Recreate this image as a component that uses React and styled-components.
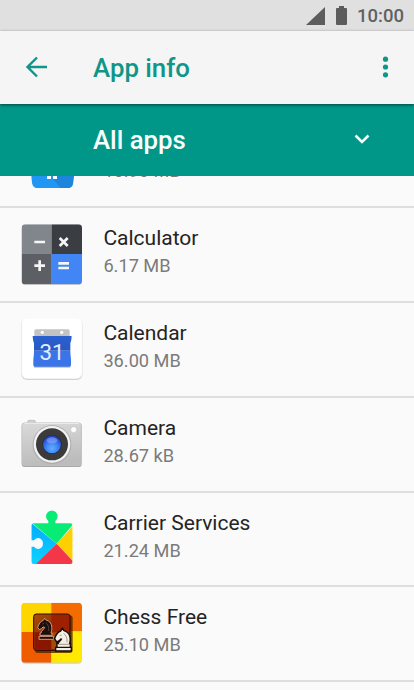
import React from 'react';
import styled, { createGlobalStyle } from 'styled-components';

const GlobalStyle = createGlobalStyle`
  body {
    margin: 0;
    background: #fafafa;
    font-family: Roboto, sans-serif;
  }
`;

const Screen = styled.div`
  display: flex;
  flex-direction: column;
  width: 414px;
  height: 690px;
  overflow: hidden;
  background: #fafafa;
`;

const StatusBar = styled.div`
  display: flex;
  flex: none;
  align-items: center;
  justify-content: flex-end;
  height: 31px;
  padding-right: 10px;
  box-sizing: border-box;
  background: #e0e0e0;
`;

const SignalIcon = styled.svg`
  width: 19px;
  height: 18px;
  margin-right: 11px;
`;

const BatteryIcon = styled.svg`
  width: 11px;
  height: 19px;
  margin: 0 10px 1px 0;
`;

const Clock = styled.span`
  width: 47px;
  padding-top: 1px;
  font-size: 18.5px;
  font-weight: 500;
  line-height: 22px;
  white-space: nowrap;
  color: #606060;
`;

const Toolbar = styled.header`
  display: flex;
  flex: none;
  align-items: center;
  position: relative;
  z-index: 1;
  height: 72.5px;
  padding: 0 25px;
  box-sizing: border-box;
  background: #f5f5f5;
  box-shadow: 0 1px 3px rgba(0, 0, 0, 0.55);
`;

const BackIcon = styled.svg`
  width: 23px;
  height: 22px;
`;

const Title = styled.h1`
  flex: 1;
  margin: 0 0 0 45px;
  padding-top: 2px;
  font-size: 25.8px;
  font-weight: 500;
  line-height: 30px;
  color: #109688;
`;

const MenuIcon = styled.svg`
  width: 8px;
  height: 22px;
`;

const Filter = styled.div`
  display: flex;
  flex: none;
  align-items: center;
  height: 72.5px;
  padding: 0 43px 0 93px;
  box-sizing: border-box;
  background: #009788;
`;

const FilterLabel = styled.span`
  flex: 1;
  font-size: 25.8px;
  font-weight: 500;
  line-height: 30px;
  color: #fafffe;
`;

const ChevronIcon = styled.svg`
  width: 18px;
  height: 12px;
  margin-bottom: 2px;
`;

const AppList = styled.ul`
  flex: 1;
  margin: 0;
  padding: 0;
  list-style: none;
  overflow: hidden;
`;

const AppRow = styled.li`
  display: flex;
  height: 94.9px;
  margin-top: ${props => (props.$scrolled ? '-63px' : '0')};
  padding: 15px 21px 0;
  box-sizing: border-box;
  border-bottom: 2px solid #dedede;
`;

const AppIcon = styled.svg`
  flex: none;
  width: 62px;
  height: 62px;
  margin-right: 20.4px;
`;

const AppText = styled.div`
  padding-top: 2px;
  white-space: nowrap;
`;

const AppName = styled.div`
  font-size: 21px;
  line-height: 27px;
  color: #242424;
`;

const AppSize = styled.div`
  padding-top: 1px;
  font-size: 18.2px;
  line-height: 26px;
  color: #7b7b7b;
`;

const Messages = () => (
  <AppIcon viewBox="0 0 62 62">
    <path d="M7 10h48L52 55q-1 5-5 5H16q-4 0-5-5z" fill="#2196f3" />
    <path d="M31 50l9 10h7q4 0 5-4l1-8H36z" fill="#1d86dc" />
    <path d="M26 44h4v7h-4zM32 44h4v7h-4z" fill="#fff" />
  </AppIcon>
);

const Calculator = () => (
  <AppIcon viewBox="33 33 186 186">
    <clipPath id="calcShape">
      <rect x="35" y="37" width="181" height="180" rx="11" />
    </clipPath>
    <rect x="35" y="40" width="181" height="179" rx="11" fill="#c9c9c9" />
    <g clipPath="url(#calcShape)">
      <path d="M35 37h90v89H35z" fill="#80868b" />
      <path d="M125 37h91v89h-91z" fill="#3a3e42" />
      <path d="M35 126h90v91H35z" fill="#5c6065" />
      <path d="M125 126h91v91h-91z" fill="#4285f4" />
    </g>
    <path
      d="M73 90h32M73 161h32M89 145v32M149 78l24 24M173 78l-24 24M145 154h32M145 168h32"
      stroke="#f5f5f5"
      strokeWidth="8"
    />
  </AppIcon>
);

const Calendar = () => (
  <AppIcon viewBox="33 30 186 186">
    <defs>
      <linearGradient id="calTop" x2="0" y2="1">
        <stop stopColor="#2a60cf" />
        <stop offset="1" stopColor="#285ac4" />
      </linearGradient>
    </defs>
    <rect x="34" y="32" width="183" height="184" rx="17" fill="#d2d2d2" />
    <rect x="35" y="30" width="181" height="182" rx="16" fill="#fff" stroke="#ededed" />
    <path d="M73 69q0-5 5-5h96q5 0 5 5v17H73z" fill="#c3c3c3" />
    <circle cx="97" cy="73" r="5" fill="#fff" />
    <circle cx="155" cy="73" r="5" fill="#fff" />
    <path d="M72 174h109v5H72z" fill="#bdc2ce" />
    <path d="M68 84h117q0 12-4 22v22H72v-22q-4-10-4-22z" fill="url(#calTop)" />
    <path d="M72 128h109q0 12 2 26v17q0 5-5 5H75q-5 0-5-5v-17q2-14 2-26z" fill="#3b74e7" />
    <text x="126" y="155" textAnchor="middle" fontFamily="Roboto" fontSize="67" fill="#e6edff">31</text>
  </AppIcon>
);

const Camera = () => (
  <AppIcon viewBox="33 33 186 186">
    <defs>
      <linearGradient id="camBody" x2="0.2" y2="1">
        <stop stopColor="#dadada" />
        <stop offset="1" stopColor="#bcbcbc" />
      </linearGradient>
      <radialGradient id="camLens" cy="0.72" r="0.65">
        <stop stopColor="#62b0ff" />
        <stop offset="0.55" stopColor="#3a7ff5" />
        <stop offset="1" stopColor="#2440b8" />
      </radialGradient>
    </defs>
    <rect x="53" y="55" width="23" height="12" rx="4" fill="#d2d2d2" stroke="#b4b4b4" strokeWidth="2" />
    <rect x="35" y="63" width="180" height="132" rx="9" fill="#a5a5a5" />
    <rect x="36" y="62" width="178" height="129" rx="9" fill="url(#camBody)" stroke="#c4c4c4" strokeWidth="2" />
    <path d="M43 64h164" stroke="#eee" strokeWidth="3" />
    <circle cx="126" cy="128" r="58" fill="#aaa" />
    <circle cx="126" cy="127" r="55" fill="#f3f3f3" />
    <circle cx="126" cy="127" r="48" fill="#3b3b3b" />
    <circle cx="126" cy="127" r="29" fill="#24283c" />
    <circle cx="126" cy="127" r="27" fill="url(#camLens)" />
    <ellipse cx="126" cy="115" rx="16" ry="9" fill="#8fa7ff" opacity="0.6" />
    <circle cx="191" cy="83" r="9" fill="#fff" stroke="#c4c4c4" strokeWidth="2" />
  </AppIcon>
);

const CarrierServices = () => (
  <AppIcon viewBox="33 36 186 186">
    <defs>
      <clipPath id="puzzle">
        <path d="M71 82h44V75q-7-5-7-14a17 17 0 0 1 35 0q0 9-7 14v7h45q7 0 7 7v108q0 7-7 7H71q-7 0-7-7v-45h8q5 7 14 7a17 17 0 0 0 0-33q-9 0-14 7h-8V89q0-7 7-7z" />
      </clipPath>
      <linearGradient id="puzzleBlue" x2="0" y2="1">
        <stop stopColor="#00a9ff" />
        <stop offset="1" stopColor="#10d4ff" />
      </linearGradient>
    </defs>
    <g clipPath="url(#puzzle)">
      <path d="M60 78l80 65-62 64H60z" fill="url(#puzzleBlue)" />
      <path d="M60 40h132v42l-52 61L66 81z" fill="#08ec76" />
      <path d="M192 87l-52 56 52 56z" fill="#ffd000" />
      <path d="M74 208l66-65 56 60v5z" fill="#f33748" />
    </g>
  </AppIcon>
);

const knight = 'M9 51h36v-7h-3c5-14 3-30-8-36l-8-4-3-4-4 6C10 9 5 18 2 27l5 7 6-3 5-5 5 1c-2 7-10 9-11 17H9z';

const Chess = () => (
  <AppIcon viewBox="33 27 186 186">
    <defs>
      <clipPath id="chessShape">
        <rect x="34" y="29" width="182" height="180" rx="12" />
      </clipPath>
      <linearGradient id="board" x2="1" y2="1">
        <stop stopColor="#a84c08" />
        <stop offset="1" stopColor="#7b1702" />
      </linearGradient>
    </defs>
    <rect x="34" y="31" width="182" height="181" rx="12" fill="#cfcfcf" />
    <g clipPath="url(#chessShape)">
      <path d="M34 29h90v90H34z" fill="#ffd500" />
      <path d="M124 29h92v86h-92z" fill="#f46b00" />
      <path d="M34 117h90v92H34z" fill="#ef5c00" />
      <path d="M124 115h92v94h-92z" fill="#ffe900" />
    </g>
    <rect x="74" y="67" width="114" height="113" rx="9" fill="#4b1e00" opacity="0.75" />
    <rect x="71" y="63" width="109" height="109" rx="8" fill="url(#board)" stroke="#2c0900" strokeWidth="3" />
    <path d="M124 66h48q5 0 5 5v47h-53z" fill="#9d2000" />
    <path d="M74 118h50v51H79q-5 0-5-5z" fill="#8a1600" />
    <path d="M124 118h53v46q0 5-5 5h-48z" fill="#a54b09" />
    <g transform="translate(81 76)">
      <path d={knight} fill="#1c100c" stroke="#d89b7b" strokeWidth="3" />
      <path d="M6 54h44v9H6z" fill="#1c100c" stroke="#d89b7b" strokeWidth="3" />
      <path d="M26 12q11 8 9 26M16 17l5-2" fill="none" stroke="#715048" strokeWidth="2" />
    </g>
    <g transform="translate(134 110)">
      <path d={knight} fill="#1a0d08" stroke="#1a0d08" strokeWidth="9" />
      <path d="M3 53h47v11H3z" fill="#f4efe4" stroke="#1a0d08" strokeWidth="4" />
      <path d={knight} fill="#f4efe4" />
      <path d="M27 11q12 10 10 27M15 18l6-2M12 44h30" fill="none" stroke="#786c60" strokeWidth="2" />
    </g>
  </AppIcon>
);

const apps = [
  { name: 'Calculator', size: '6.17 MB', Icon: Calculator },
  { name: 'Calendar', size: '36.00 MB', Icon: Calendar },
  { name: 'Camera', size: '28.67 kB', Icon: Camera },
  { name: 'Carrier Services', size: '21.24 MB', Icon: CarrierServices },
  { name: 'Chess Free', size: '25.10 MB', Icon: Chess },
];

const App = () => (
  <>
    <GlobalStyle />
    <Screen>
      <StatusBar>
        <SignalIcon viewBox="0 0 19 18">
          <path d="M19 0v18H0z" fill="#5c5c5c" />
        </SignalIcon>
        <BatteryIcon viewBox="0 0 11 19">
          <path d="M3 0h5v2h2q1 0 1 1v15q0 1-1 1H1q-1 0-1-1V3q0-1 1-1h2z" fill="#5c5c5c" />
        </BatteryIcon>
        <Clock>10:00</Clock>
      </StatusBar>
      <Toolbar>
        <BackIcon viewBox="0 0 23 22">
          <path d="M22 11H3M12 1.5L2.5 11l9.500 9.500" fill="none" stroke="#109688" strokeWidth="2.400" />
        </BackIcon>
        <Title>App info</Title>
        <MenuIcon viewBox="0 0 8 22">
          <circle cx="4.500" cy="3.200" r="2.600" fill="#109688" />
          <circle cx="4.500" cy="11" r="2.600" fill="#109688" />
          <circle cx="4.500" cy="18.800" r="2.600" fill="#109688" />
        </MenuIcon>
      </Toolbar>
      <Filter>
        <FilterLabel>All apps</FilterLabel>
        <ChevronIcon viewBox="0 0 18 12">
          <path d="M2.500 2.500L9 9l6.500-6.500" fill="none" stroke="#f2fffd" strokeWidth="2.600" />
        </ChevronIcon>
      </Filter>
      <AppList>
        {/* The first row is partly scrolled under the filter bar */}
        <AppRow $scrolled>
          <Messages />
          <AppText>
            <AppName>&nbsp;</AppName>
            <AppSize>10.90 MB</AppSize>
          </AppText>
        </AppRow>
        {apps.map(({ name, size, Icon }) => (
          <AppRow key={name}>
            <Icon />
            <AppText>
              <AppName>{name}</AppName>
              <AppSize>{size}</AppSize>
            </AppText>
          </AppRow>
        ))}
      </AppList>
    </Screen>
  </>
);

export default App;
